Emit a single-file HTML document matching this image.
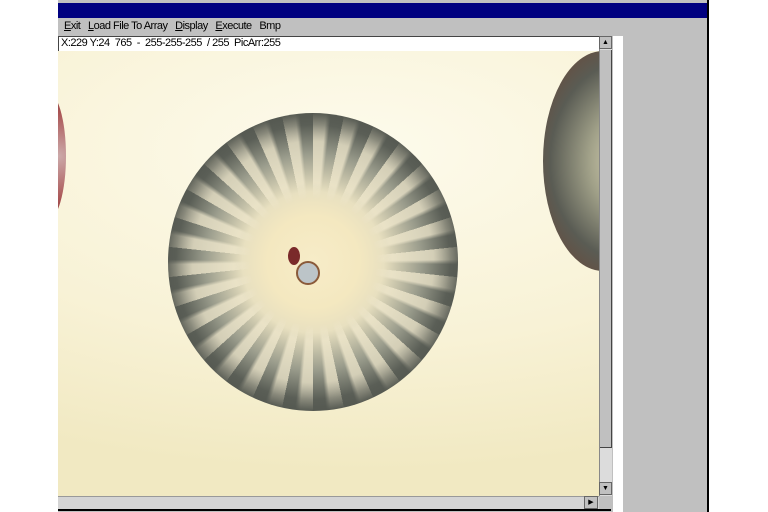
<!DOCTYPE html>
<html><head><style>
body{margin:0;width:768px;height:512px;background:#fff;position:relative;overflow:hidden;font-family:"Liberation Sans",sans-serif}
div{position:absolute;box-sizing:border-box}
</style></head><body>
<div style="left:58px;top:0;width:651px;height:512px;background:#c0c0c0;border-right:2px solid #000"></div>
<div style="left:58px;top:3px;width:649px;height:15px;background:#000080"></div>
<div style="left:64px;top:20px;font-size:11px;color:#000;white-space:pre;letter-spacing:-0.5px"><u>E</u>xit   <u>L</u>oad File To Array   <u>D</u>isplay   <u>E</u>xecute   Bmp</div>
<div style="left:58px;top:36px;width:541px;height:15px;background:#fff;border-left:1px solid #444;border-top:1px solid #444;font-size:11px;line-height:13px;padding-left:2px;white-space:pre;letter-spacing:-0.5px">X:229 Y:24  765  -  255-255-255  / 255  PicArr:255</div>
<div style="left:613px;top:36px;width:10px;height:476px;background:#fff"></div>
<div style="left:58px;top:51px;width:541px;height:445px;background:radial-gradient(ellipse 700px 320px at 300px 100px,#fdfbec 0%,#f8f2d6 60%,#f1e9c2 100%);overflow:hidden">
 <div style="left:-30px;top:40px;width:38px;height:130px;border-radius:50%;background:radial-gradient(circle at 80% 50%,#caa 0%,#a55 60%,#7a3030 100%)"></div>
 <div style="left:485px;top:0px;width:120px;height:220px;border-radius:50%;background:radial-gradient(ellipse at 75% 50%,#e8e0c0 0%,#a0a088 35%,#5a5c54 65%,#6a4a3a 90%,#a86050 100%)"></div>
 <div style="left:110px;top:62px;width:290px;height:298px;border-radius:50%;background:radial-gradient(circle at 50% 50%,#f7ecc8 0%,#f4e8c0 22%,#e8e0c0 34%,#9a9c8c 52%,#5a5e56 66%,#454842 88%,#3a3a36 97%,#5a5046 100%)"></div>
 <div style="left:110px;top:62px;width:290px;height:298px;border-radius:50%;background:repeating-conic-gradient(from 0deg at 50% 50%,rgba(240,232,205,.75) 0deg 5deg,rgba(0,0,0,0) 7deg 12deg);-webkit-mask:radial-gradient(circle,transparent 30%,#000 38%,#000 58%,transparent 72%);mask:radial-gradient(circle,transparent 30%,#000 38%,#000 58%,transparent 72%)"></div>
 <div style="left:238px;top:210px;width:24px;height:24px;border-radius:50%;background:#bcc4c8;border:2px solid #8a5a3a"></div>
 <div style="left:230px;top:196px;width:12px;height:18px;border-radius:50%;background:#7a2a2a"></div>
</div>
<div style="left:599px;top:36px;width:13px;height:460px;background:#dcdcdc;border-left:1px solid #888"></div>
<div style="left:599px;top:36px;width:13px;height:13px;background:#c0c0c0;border:1px solid #666;font-size:7px;text-align:center;line-height:11px">▲</div>
<div style="left:600px;top:50px;width:12px;height:398px;background:#c0c0c0;border-right:1px solid #444;border-bottom:1px solid #444"></div>
<div style="left:599px;top:482px;width:13px;height:13px;background:#c0c0c0;border:1px solid #666;font-size:7px;text-align:center;line-height:11px">▼</div>
<div style="left:58px;top:496px;width:541px;height:13px;background:#d4d4d4;border-top:1px solid #999"></div>
<div style="left:584px;top:496px;width:14px;height:13px;background:#c0c0c0;border:1px solid #666;font-size:7px;text-align:center;line-height:11px">▶</div>
<div style="left:58px;top:509px;width:553px;height:2px;background:#000"></div>
</body></html>
